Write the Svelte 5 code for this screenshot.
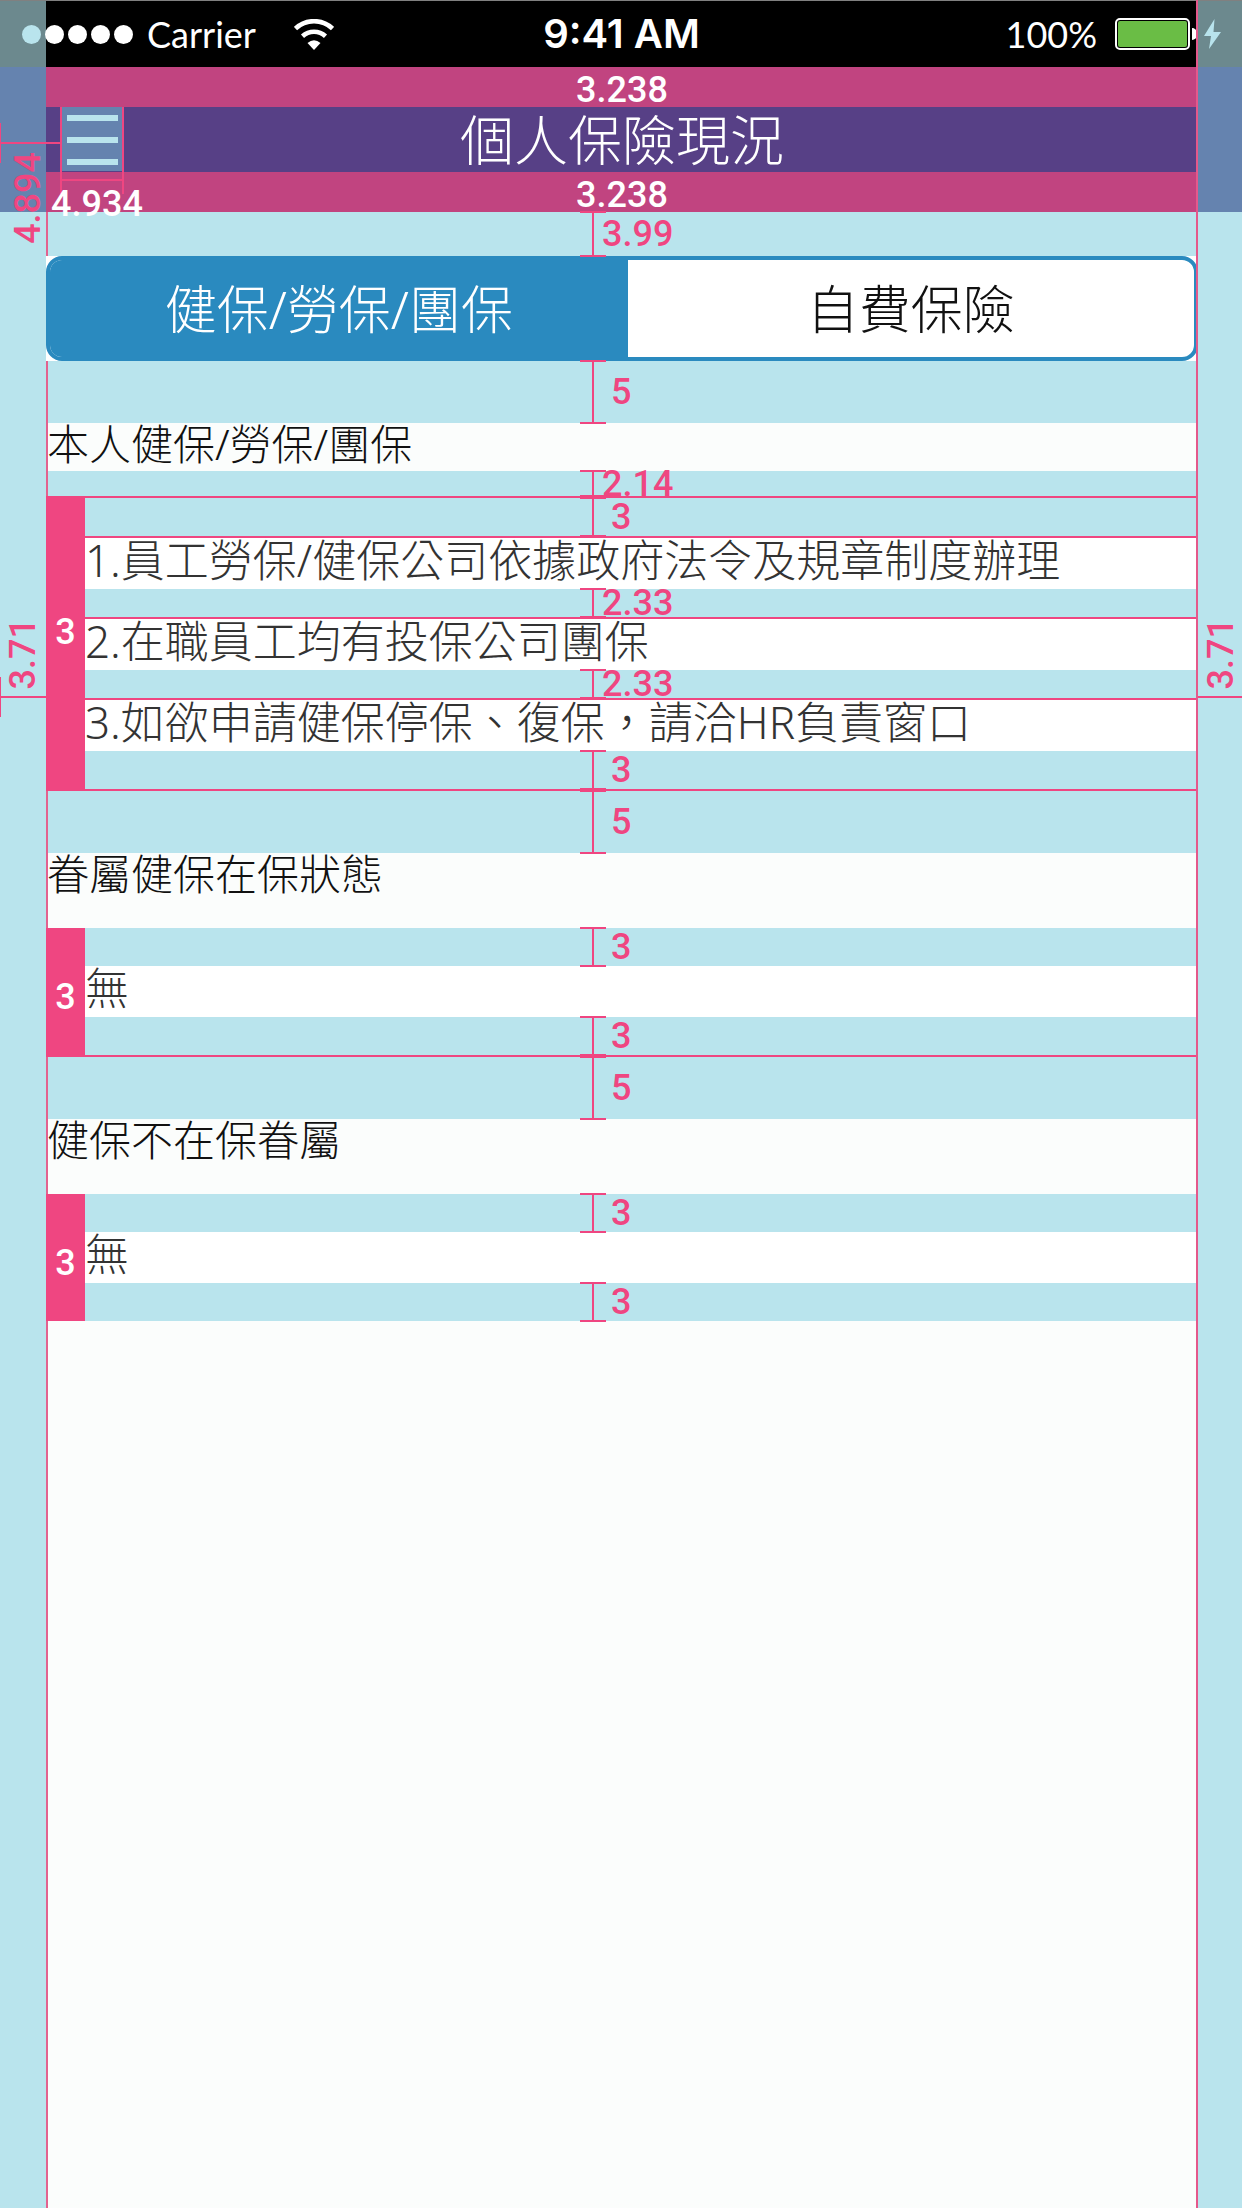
<script>
  let active = $state(0);
  const tabs = ['健保/勞保/團保', '自費保險'];
  const rules = [
    '1.員工勞保/健保公司依據政府法令及規章制度辦理',
    '2.在職員工均有投保公司團保',
    '3.如欲申請健保停保、復保，請洽HR負責窗口'
  ];
</script>

{#snippet band(value, size)}
  <div class="band {size}">
    <span class="ruler"></span>
    <span class="value" class:wide={value.length > 1}>{value}</span>
  </div>
{/snippet}

<div class="screen">
  <div class="status">
    <div class="carrier">
      <span class="dots"><i class="tinted"></i><i></i><i></i><i></i><i></i></span>
      <span class="network">Carrier</span>
      <svg class="wifi" viewBox="0 0 40 31" aria-hidden="true">
        <path d="M1.5 9.5A27 27 0 0 1 38.5 9.5" fill="none" stroke="#fff" stroke-width="4.6" />
        <path d="M8.5 17.2A17 17 0 0 1 31.500 17.2" fill="none" stroke="#fff" stroke-width="4.6" />
        <path d="M13.500 24Q20 18.500 26.500 24L20 31Z" fill="#fff" />
      </svg>
    </div>
    <time>9:41 AM</time>
    <div class="power">
      <span>100%</span>
      <span class="battery"></span>
      <span class="nub"></span>
      <svg class="bolt" viewBox="0 0 17 30" aria-hidden="true">
        <path d="M10.500 0L0 17H7L5 30L17 13H9.500Z" fill="#b8e3ec" />
      </svg>
    </div>
  </div>

  <header>
    <div class="margin">3.238</div>
    <div class="bar">
      <div class="menu-area">
        <button class="menu" aria-label="Menu"><i></i><i></i><i></i></button>
        <span class="menu-size"></span>
        <span class="menu-value">4.934</span>
      </div>
      <h1>個人保險現況</h1>
    </div>
    <div class="margin">3.238</div>
    <span class="side-line"></span>
    <span class="upright header-value">4.894</span>
  </header>

  <main>
    <div class="column">
      {@render band('3.99', 'h44')}
      <div class="tabs-box">
        <div class="tabs" role="tablist">
          {#each tabs as tab, i}
            <button role="tab" aria-selected={active === i} class:active={active === i} onclick={() => (active = i)}>{tab}</button>
          {/each}
        </div>
      </div>
      {@render band('5', 'h62')}

      <h2>本人健保/勞保/團保</h2>
      {@render band('2.14', 'h25')}
      <section class="group lined-top lined-bottom">
        <div class="gauge tall">3</div>
        {@render band('3', 'h38')}
        {#each rules as rule, i}
          <p class="row lined">{rule}</p>
          {@render band(i < 2 ? '2.33' : '3', i < 2 ? 'h28' : 'h38')}
        {/each}
      </section>
      {@render band('5', 'h62')}

      <h2 class="roomy">眷屬健保在保狀態</h2>
      <section class="group lined-bottom">
        <div class="gauge">3</div>
        {@render band('3', 'h38')}
        <p class="row">無</p>
        {@render band('3', 'h38')}
      </section>
      {@render band('5', 'h62')}

      <h2 class="roomy">健保不在保眷屬</h2>
      <section class="group">
        <div class="gauge">3</div>
        {@render band('3', 'h38')}
        <p class="row">無</p>
        {@render band('3', 'h38')}
      </section>
    </div>
    <div class="edge left"><span class="upright">3.71</span></div>
    <div class="edge right"><span class="upright">3.71</span></div>
  </main>
  <span class="guide"></span>
</div>

<style>
  :global(body) {
    margin: 0;
  }
  .screen {
    --pink: #ef4681;
    --sky: #b9e4ed;
    --side: 46px;
    position: relative;
    display: flex;
    flex-direction: column;
    min-height: 100vh;
    box-sizing: border-box;
    overflow: hidden;
    background: var(--sky);
    font-family: 'Noto Sans', 'Noto Sans CJK TC', sans-serif;
    font-weight: 300;
    color: #111;
  }
  h1, h2, p {
    margin: 0;
    font-weight: 300;
  }
  button {
    margin: 0;
    padding: 0;
    border: 0;
    border-radius: 0;
    font: inherit;
    color: inherit;
    background: none;
  }

  /* status bar */
  .status {
    display: grid;
    grid-template-columns: 1fr auto 1fr;
    align-items: center;
    height: 67px;
    padding: 0 21px 0 22px;
    box-sizing: border-box;
    border-top: 1px solid #808080;
    background: linear-gradient(to right, #6c898e 46px, #000 46px, #000 calc(100% - 44px), #6c898e calc(100% - 44px));
    color: #fff;
    font-family: Lato, sans-serif;
    font-weight: 400;
    font-size: 36px;
    line-height: 48px;
  }
  .carrier, .power, .dots {
    display: flex;
    align-items: center;
  }
  .dots {
    gap: 4px;
    margin-right: 14px;
  }
  .dots i {
    width: 19px;
    height: 19px;
    border-radius: 50%;
    background: #fff;
  }
  .dots .tinted {
    background: var(--sky);
  }
  .wifi {
    width: 40px;
    height: 31px;
    margin-left: 38px;
  }
  time {
    font: 600 40px/48px Inter, sans-serif;
  }
  .power {
    justify-content: flex-end;
  }
  .battery {
    width: 75px;
    height: 32px;
    margin-left: 18px;
    box-sizing: border-box;
    border: 2px solid #fff;
    border-radius: 5px;
    padding: 1px;
    background: #6abd45 content-box;
  }
  .nub {
    width: 5px;
    height: 12px;
    margin-left: 2px;
    border-radius: 0 5px 5px 0;
    background: #fff;
  }
  .bolt {
    width: 17px;
    height: 30px;
    margin-left: 7px;
  }

  /* title bar */
  header {
    position: relative;
    padding: 0 44px 0 var(--side);
    background: #6583af;
  }
  .margin {
    height: 40px;
    padding-top: 5px;
    box-sizing: border-box;
    background: #c14480;
    color: #fff;
    font: 500 36px/36px Roboto, sans-serif;
    text-align: center;
  }
  .bar {
    display: grid;
    grid-template-columns: 1fr auto 1fr;
    align-items: center;
    height: 65px;
    background: #574086;
    color: #fff;
  }
  h1 {
    font-size: 54px;
    line-height: 64px;
  }
  .menu-area {
    position: relative;
    width: 62px;
    height: 65px;
    margin-left: 15px;
  }
  .menu {
    display: flex;
    flex-direction: column;
    justify-content: space-between;
    width: 100%;
    height: 64px;
    padding: 8px 5px 6px 6px;
    background: #6583af;
  }
  .menu i {
    height: 6px;
    background: var(--sky);
  }
  .menu-size {
    position: absolute;
    inset: 0 -1px -22px -1px;
    border: solid var(--pink);
    border-width: 0 2px;
  }
  .menu-size::after {
    content: '';
    position: absolute;
    left: 0;
    right: 0;
    bottom: 13px;
    height: 2px;
    background: var(--pink);
  }
  .menu-value {
    position: absolute;
    top: 79px;
    left: -10px;
    z-index: 2;
    font: 500 36px/36px Roboto, sans-serif;
  }
  .upright {
    position: absolute;
    writing-mode: vertical-rl;
    transform: rotate(180deg);
    color: var(--pink);
    font: 500 36px/36px Roboto, sans-serif;
  }
  .header-value {
    top: 85px;
    left: 10px;
    z-index: 2;
  }
  .side-line {
    position: absolute;
    left: 0;
    top: 75px;
    width: 61px;
    height: 2px;
    background: var(--pink);
  }
  .side-line::before {
    content: '';
    position: absolute;
    left: 0;
    top: -19px;
    width: 1px;
    height: 40px;
    background: var(--pink);
  }

  /* content */
  main {
    position: relative;
    flex: 1;
    display: flex;
    padding: 0 44px 0 var(--side);
  }
  .column {
    flex: 1;
    min-width: 0;
    background: #fbfdfc;
    box-shadow: inset 2px 0 #e2628f;
  }
  .band {
    position: relative;
    display: flex;
    align-items: center;
    background: var(--sky);
    color: var(--pink);
    font: 500 36px/36px Roboto, sans-serif;
    box-shadow: inset 2px 0 #e2628f;
  }
  .h25 { height: 25px; }
  .h28 { height: 28px; }
  .h38 { height: 38px; }
  .h44 { height: 44px; }
  .h62 { height: 62px; }
  .ruler {
    position: relative;
    z-index: 1;
    align-self: stretch;
    width: 26px;
    margin: -1px 0 -1px calc(50% - 42px);
    box-sizing: border-box;
    border: solid var(--pink);
    border-width: 2px 0;
    background: linear-gradient(var(--pink), var(--pink)) center / 2px 100% no-repeat;
  }
  .value {
    position: relative;
    z-index: 1;
    margin-left: 5px;
  }
  .value.wide {
    margin-left: -4px;
  }
  .tabs-box {
    background: #fff;
  }
  .tabs {
    display: grid;
    grid-template-columns: 101fr 99fr;
    height: 105px;
    box-sizing: border-box;
    border: 4px solid #2a8abf;
    border-radius: 16px;
    overflow: hidden;
    font-size: 52px;
    line-height: 60px;
  }
  .tabs .active {
    background: #2a8abf;
    color: #fff;
  }
  h2 {
    min-height: 48px;
    padding-left: 1px;
    font-size: 42px;
    line-height: 42px;
  }
  .roomy {
    min-height: 75px;
  }
  .group {
    position: relative;
    padding-left: 39px;
    background: #fff;
  }
  .group .band {
    margin-left: -39px;
  }
  .lined-top {
    border-top: 2px solid var(--pink);
  }
  .lined-bottom {
    border-bottom: 2px solid var(--pink);
  }
  .gauge {
    position: absolute;
    inset: 0 auto 0 0;
    z-index: 1;
    display: flex;
    align-items: center;
    justify-content: center;
    width: 39px;
    padding-top: 10px;
    box-sizing: border-box;
    background: var(--pink);
    color: #fff;
    font: 500 36px/36px Roboto, sans-serif;
  }
  .gauge.tall {
    padding: 0 0 24px;
  }
  .row {
    min-height: 51px;
    font-size: 44px;
    line-height: 44px;
    color: #333;
  }
  .row.lined {
    border-top: 2px solid var(--pink);
  }
  .edge {
    position: absolute;
    top: 465px;
    height: 40px;
    background: linear-gradient(var(--pink), var(--pink)) center / 100% 2px no-repeat;
  }
  .edge .upright {
    bottom: 28px;
    left: 5px;
  }
  .edge.left {
    left: 0;
    width: var(--side);
    box-shadow: inset 1px 0 var(--pink);
  }
  .edge.right {
    right: 0;
    width: 44px;
  }
  .guide {
    position: absolute;
    top: 0;
    bottom: 0;
    right: 44px;
    width: 2px;
    background: #e5588b;
  }
</style>
